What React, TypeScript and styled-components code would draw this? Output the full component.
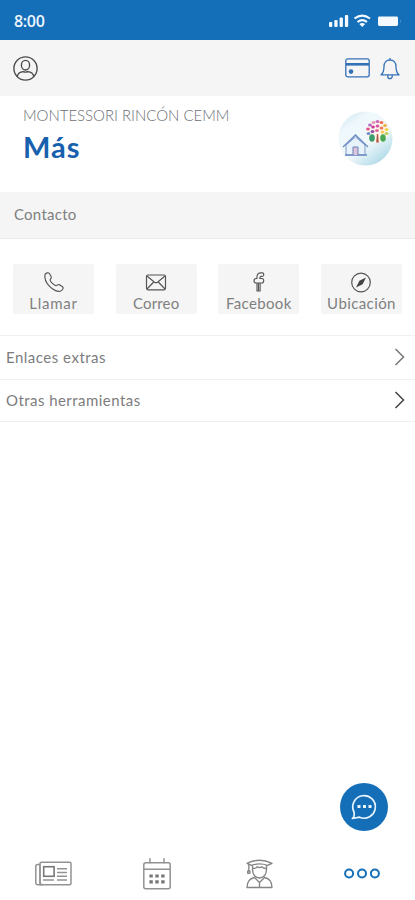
import React from 'react';
import styled, { createGlobalStyle } from 'styled-components';

const blue = '#146eb8';

const GlobalStyle = createGlobalStyle`
  * { box-sizing: border-box; }
  body { margin: 0; background: #fff; font-family: Lato, 'Open Sans', sans-serif; }
  svg { display: block; flex: none; overflow: visible; }
  button { font: inherit; border: 0; padding: 0; background: none; color: inherit; }
`;

const Screen = styled.div`
  position: relative;
  width: 415px;
  height: 900px;
  display: flex;
  flex-direction: column;
  overflow: hidden;
  background: #fff;
`;

const StatusBar = styled.div`
  height: 40px;
  flex: none;
  display: flex;
  align-items: center;
  justify-content: space-between;
  padding: 1px 13px 0 14px;
  background: ${blue};
  color: #eef6ff;
`;

const Clock = styled.span`
  font: 600 16px/20px 'Open Sans', sans-serif;
  letter-spacing: -0.35px;
`;

const TopBar = styled.header`
  height: 56px;
  flex: none;
  display: flex;
  align-items: center;
  justify-content: space-between;
  padding: 0 15px 0 13px;
  background: #f5f5f5;
`;

const Actions = styled.div`
  display: flex;
  align-items: center;
  gap: 10px;
`;

const Heading = styled.section`
  height: 96px;
  flex: none;
  display: flex;
  justify-content: space-between;
  padding: 9px 22px 0 23px;
`;

const Logo = styled.div`
  padding-top: 6px;
`;

const School = styled.div`
  font-size: 15px;
  line-height: 20px;
  color: #6c6f75;
  font-weight: 300;
`;

const Title = styled.h1`
  margin: 3px 0 0;
  font-size: 29px;
  line-height: 38px;
  font-weight: 700;
  color: #1760ae;
`;

const Label = styled.span<{ $spacing?: number }>`
  display: inline-block;
  white-space: nowrap;
  letter-spacing: ${({ $spacing = 0 }) => $spacing}px;
`;

const Section = styled.div`
  height: 47px;
  flex: none;
  padding: 12px 14px;
  background: #f5f5f5;
  border-bottom: 1px solid #e9e9e9;
  font-size: 15px;
  line-height: 20px;
  color: #808080;
`;

const Contacts = styled.div`
  height: 96px;
  flex: none;
  display: grid;
  grid-template-columns: repeat(4, 81px);
  justify-content: space-between;
  padding: 25px 13px 0 13px;
`;

const ContactButton = styled.button`
  height: 50px;
  display: flex;
  flex-direction: column;
  align-items: center;
  padding-top: 8px;
  border-radius: 2px;
  background: #f5f5f5;
  color: #808080;
  font-size: 15px;
  line-height: 18px;
  gap: 2px;
`;

const Row = styled.div<{ $height: number }>`
  height: ${({ $height }) => $height}px;
  flex: none;
  display: flex;
  align-items: center;
  justify-content: space-between;
  padding: 0 9px 1px 6px;
  border-top: 1px solid #f0f0f0;
  font-size: 15px;
  color: #7d7d7d;
`;

const ListEnd = styled.div`
  height: 1px;
  background: #f0f0f0;
`;

const BottomNav = styled.nav`
  height: 53px;
  flex: none;
  margin-top: auto;
  display: grid;
  grid-template-columns: 107px 99px 107px 98px;
  justify-items: center;
  align-items: center;
`;

const ChatButton = styled.button`
  position: absolute;
  right: 27px;
  bottom: 69px;
  width: 48px;
  height: 48px;
  display: grid;
  place-items: center;
  border-radius: 50%;
  background: ${blue};
`;

const StatusIcons = () => (
  <svg width="73" height="14" viewBox="0 0 73 14" fill="#f4f9ff">
    <rect x="0" y="8" width="3.3" height="5" rx="1" />
    <rect x="5.3" y="6" width="3.3" height="7" rx="1" />
    <rect x="10.6" y="3.5" width="3.3" height="9.5" rx="1" />
    <rect x="15.9" y="1" width="3.3" height="12" rx="1" />
    <g fill="none" stroke="#f4f9ff" strokeWidth="2.1">
      <path d="M25.5 4.5Q33.2-1.4 41 4.5M28.5 8Q33.2 4.2 38 8" />
    </g>
    <path d="M30.3 10Q33.2 7.8 36.2 10L33.2 13Z" />
    <rect x="49" y="2.5" width="20" height="9.5" rx="1.4" />
    <path d="M71.5 5.5q1.4 1.7 0 3.4z" opacity=".5" />
  </svg>
);

const ProfileIcon = () => (
  <svg width="25" height="25" viewBox="0 0 25 25" fill="none" stroke="#4a4a4a" strokeWidth="1.35">
    <circle cx="12.5" cy="12.5" r="11.6" />
    <ellipse cx="12.5" cy="9.2" rx="4.1" ry="4.8" />
    <path d="M4.2 20.5c.7-3.5 3.3-4.7 6-4.9q2.3 1 4.6 0c2.7.2 5.3 1.4 6 4.9" />
  </svg>
);

const CardIcon = () => (
  <svg width="25" height="20" viewBox="0 0 25 20" fill="none" stroke="#3470b6" strokeWidth="1.3">
    <rect x=".8" y=".8" width="23.4" height="18" rx="2" />
    <path d="M1 6.3h23" strokeWidth="2.6" />
    <circle cx="6" cy="13.6" r="2.3" fill="#3470b6" stroke="none" />
  </svg>
);

const BellIcon = () => (
  <svg width="20" height="23" viewBox="0 0 20 23" fill="none" stroke="#3470b6" strokeWidth="1.3" strokeLinejoin="round">
    <path d="M10 1v2M1 17.8c2.8-2 3-5.3 3-8.3C4 5.5 6.5 3 10 3s6 2.5 6 6.5c0 3 .2 6.3 3 8.3zM7.8 18.2v1.3a2.2 2.2 0 0 0 4.4 0v-1.3" />
  </svg>
);

const petals = [
  [30, 18, '#dc568b'], [32, 14, '#b066c0'], [35.5, 11.5, '#e594bd'],
  [39.5, 10.5, '#c86bbc'], [43.5, 11.5, '#f06e5e'], [47, 14.5, '#f0ad45'],
  [48.5, 18.5, '#f4d143'], [35, 16, '#c83c9a'], [39.5, 15, '#db4fa7'],
  [43.5, 17, '#ec785c'], [34.5, 20.5, '#8e4ca2'], [30.5, 22.5, '#6e8fd0'],
  [44.5, 21, '#ffc75a'], [39, 19.5, '#e0629b'], [48.5, 22.5, '#b4cf5c'],
] as const;

const SchoolLogo = () => (
  <svg width="55" height="55" viewBox="0 0 55 55">
    <defs>
      <linearGradient id="sky" x2=".75" y2="1">
        <stop stopColor="#c3e2ef" />
        <stop offset=".28" stopColor="#eff8fc" />
        <stop offset=".65" stopColor="#f0f8fb" />
        <stop offset="1" stopColor="#add9e7" />
      </linearGradient>
    </defs>
    <circle cx="27.5" cy="27.5" r="27" fill="url(#sky)" />
    <path d="M8 34L17.5 26 27 34V44H8Z" fill="#e8f2fa" stroke="#819bc9" />
    <path d="M5 36L17.5 24 30 36M7 44H29" fill="none" stroke="#6e8cc4" strokeWidth="1.4" />
    <path d="M15 44V36h5v8" fill="#dcc5da" stroke="#6b80b8" />
    <circle cx="39.5" cy="20.5" r="11" fill="#fff7ec" />
    {petals.map(([x, y, color]) => <ellipse key={`${x}-${y}`} cx={x} cy={y} rx="1.9" ry="1.6" fill={color} />)}
    <ellipse cx="34" cy="27" rx="2.8" ry="3.8" fill="#3c9e6c" />
    <ellipse cx="45" cy="27" rx="2.8" ry="3.8" fill="#4ba852" />
    <path d="M38.2 31.5l.7-8.5h1.2l.7 8.5z" fill="#af5740" />
  </svg>
);

const PhoneIcon = () => (
  <svg width="20" height="20" viewBox="0 0 20 20" fill="none" stroke="#555" strokeWidth="1.15" strokeLinejoin="round">
    <path d="M1 2.4C2.4.7 4.4.2 5.4 1.5l1.7 3c.8 1.5-.5 2.2-.9 3.2-.6 1.5 4.5 6.3 6 5.9 1-.3 1.8-1.7 3.3-.8l3 1.9c1.3 1 .4 2.8-1.1 3.9-3.1 2.3-8.6-.8-11.8-4.2C2.2 11 .2 6.5 1 2.4Z" />
  </svg>
);

const MailIcon = () => (
  <svg width="20" height="20" viewBox="0 0 20 20" fill="none" stroke="#555" strokeWidth="1.2">
    <rect x=".5" y="3" width="19" height="14.8" rx="1.5" />
    <path d="M1 4l7.5 6.2q1.5 1 3 0L19 4M1 17l6.7-7M19 17l-6.7-7" />
  </svg>
);

const FacebookIcon = () => (
  <svg width="20" height="20" viewBox="0 0 20 20" fill="none" stroke="#555" strokeWidth="1.15" strokeLinejoin="round">
    <path d="M8 19v-8H7C4.4 11 4.4 6.5 7 6.5h1V4.7C8 1.8 9.7.9 12 .9h1.3c2 0 2 3.4 0 3.4H12c-1 0-1.2.7-1.2 2.2h2.3c2.2 0 2.1 4.5-.2 4.5h-1.8v8z" />
    <path d="M8.1 11h2.8M9.5 11v7.7" />
  </svg>
);

const CompassIcon = () => (
  <svg width="20" height="20" viewBox="0 0 20 20" fill="none" stroke="#555" strokeWidth="1.2">
    <circle cx="10" cy="10.5" r="9.3" />
    <path d="M15 5.5L11.6 12.2 5 15.5 8.4 8.8Z" fill="#444" stroke="none" />
  </svg>
);

const Chevron = ({ color = '#777' }: { color?: string }) => (
  <svg width="12" height="18" viewBox="0 0 12 18" fill="none" stroke={color} strokeWidth="1.5">
    <path d="M1.5 1l8 8-8 8" />
  </svg>
);

const NewsIcon = () => (
  <svg width="37" height="24" viewBox="0 0 37 24" fill="none" stroke="#929292" strokeWidth="1.5">
    <rect x="5" y=".3" width="31" height="22.4" rx="1.5" />
    <path d="M5 2.5H2.5Q.8 2.5.8 4.5v16.2q0 2 2.2 2h5M5 2.5v18q0 2.2 2 2.2M22 6.7h10M22 10.5h10M22 14.3h10M22 18.1h10M8 18.1h11" />
    <rect x="8.7" y="4.7" width="10.4" height="9.6" stroke="#777" strokeWidth="1.6" />
  </svg>
);

const CalendarIcon = () => (
  <svg width="28" height="32" viewBox="0 0 28 32" fill="none" stroke="#929292" strokeWidth="1.5">
    <rect x=".8" y="4.8" width="26.4" height="26" rx="2" />
    <path d="M1 11.2h26M7 .3v5M21 .3v5" />
    <path d="M6.4 18h3.4M12.3 18h3.4M18.2 18h3.4M6.4 23.8h3.4M12.3 23.8h3.4M18.2 23.8h3.4" stroke="#777" strokeWidth="3.2" />
  </svg>
);

const StudentIcon = () => (
  <svg width="27" height="30" viewBox="0 0 27 30" fill="none" stroke="#858585" strokeWidth="1.35" strokeLinejoin="round">
    <path d="M1 4.3Q13.5-1.8 26 4.3L21.5 6.4Q13.5 3.4 5.5 6.4ZM2.8 5v7M1.7 12h2.2v2.2H1.7z" />
    <path d="M6.5 6.3v4.3c0 5.2 3 8.4 7 8.4s7-3.2 7-8.4V6.3M6.5 9.5Q10 9.6 11 7.7q2.5 1.6 5 0 1 1.9 4.5 1.8" />
    <path d="M8.4 18.5C4 19.5 1 22.8 1 28.5h25c0-5.7-3-9-7.4-10L13.5 23.6l-5.1-5.1M13.5 23.6v4.7" />
  </svg>
);

const MoreIcon = () => (
  <svg width="36" height="12" viewBox="0 0 36 12" fill="none" stroke={blue} strokeWidth="2">
    <circle cx="5.1" cy="5.5" r="4" />
    <circle cx="18" cy="5.5" r="4" />
    <circle cx="30.9" cy="5.5" r="4" />
  </svg>
);

const ChatIcon = () => (
  <svg width="26" height="26" viewBox="0 0 26 26" fill="none" stroke="#eaf6ff" strokeWidth="1.7" strokeLinejoin="round">
    <path d="M3 18A11.3 11.3 0 1 1 8.5 23.2L1.4 24.5Q3.9 22.5 3 18Z" />
    <path d="M6.5 12.5h3M12 12.5h3M17.5 12.5h3" strokeWidth="2.8" />
  </svg>
);

const contacts = [
  { label: 'Llamar', spacing: 0.75, icon: <PhoneIcon /> },
  { label: 'Correo', spacing: 0.15, icon: <MailIcon /> },
  { label: 'Facebook', spacing: 0.35, icon: <FacebookIcon /> },
  { label: 'Ubicación', spacing: 0.4, icon: <CompassIcon /> },
];

export default function App() {
  return (
    <>
      <GlobalStyle />
      <Screen>
        <StatusBar><Clock>8:00</Clock><StatusIcons /></StatusBar>
        <TopBar><ProfileIcon /><Actions><CardIcon /><BellIcon /></Actions></TopBar>
        <Heading>
          <div>
            <School><Label $spacing={-0.02}>MONTESSORI RINCÓN CEMM</Label></School>
            <Title><Label $spacing={1}>Más</Label></Title>
          </div>
          <Logo><SchoolLogo /></Logo>
        </Heading>
        <Section><Label $spacing={0.25}>Contacto</Label></Section>
        <Contacts>
          {contacts.map(({ label, spacing, icon }) => (
            <ContactButton key={label}>{icon}<Label $spacing={spacing}>{label}</Label></ContactButton>
          ))}
        </Contacts>
        <Row $height={44}><Label $spacing={0.5}>Enlaces extras</Label><Chevron /></Row>
        <Row $height={42}><Label $spacing={0.45}>Otras herramientas</Label><Chevron color="#444" /></Row>
        <ListEnd />
        <BottomNav><NewsIcon /><CalendarIcon /><StudentIcon /><MoreIcon /></BottomNav>
        <ChatButton aria-label="Chat"><ChatIcon /></ChatButton>
      </Screen>
    </>
  );
}
